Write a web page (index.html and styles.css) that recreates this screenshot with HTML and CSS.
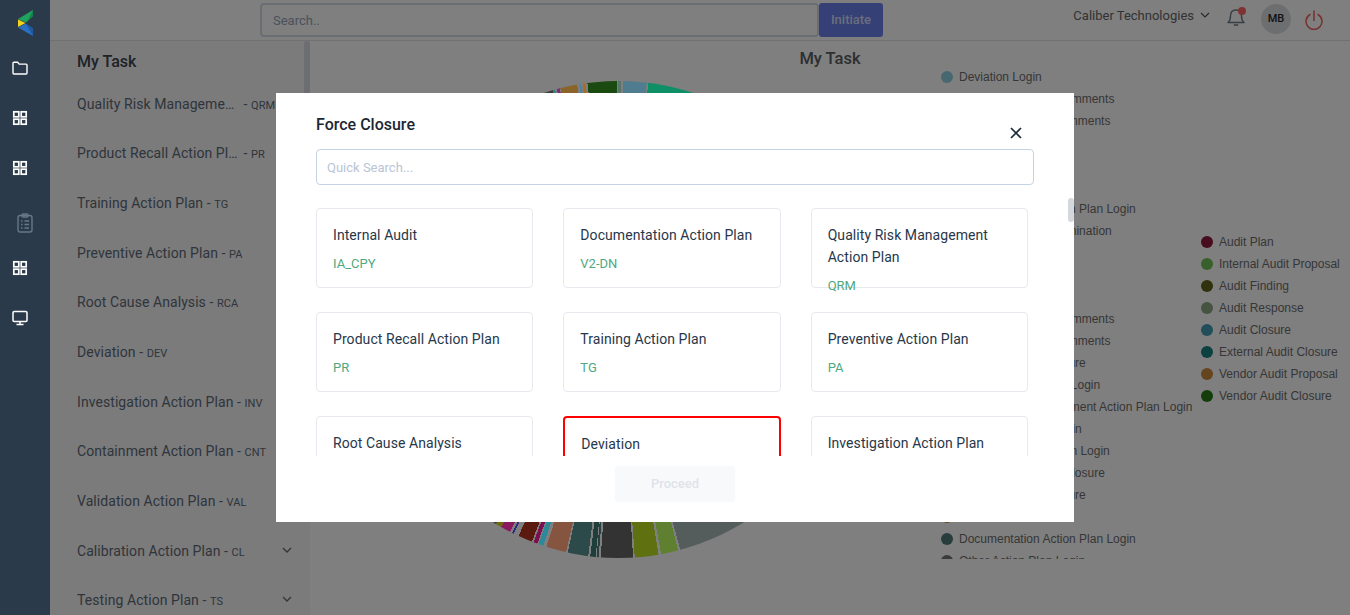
FILE: index.html
```html
<!DOCTYPE html>
<html lang="en">
<head>
<meta charset="utf-8">
<title>My Task</title>
<link rel="stylesheet" href="styles.css">
</head>
<body>
<div class="app">
  <aside class="rail">
    <div class="rail-logo">
      <svg width="16" height="27" viewBox="0 0 16 27">
        <polygon points="15,0 15,6 8,12.5 0,9" fill="#1fa35c"/>
        <polygon points="15,0 15,6 10,10.5" fill="#16804a"/>
        <polygon points="0,9.5 7.5,13 0,17" fill="#f2d21b"/>
        <polygon points="0,17.5 7.5,13.6 15,18.5 15,26" fill="#2a6fc0"/>
        <polygon points="7.5,13.6 15,18.5 15,26" fill="#1f5aa5"/>
      </svg>
    </div>
    <div class="rail-item">
      <svg width="16" height="16" viewBox="0 0 16 16"><path d="M1 3.2a1 1 0 0 1 1-1h3.6l1.6 1.9H14a1 1 0 0 1 1 1V13a1 1 0 0 1-1 1H2a1 1 0 0 1-1-1z" fill="none" stroke="#fff" stroke-width="1.4" stroke-linejoin="round"/></svg>
    </div>
    <div class="rail-item"><svg width="16" height="16" viewBox="0 0 16 16"><g fill="none" stroke="#fff" stroke-width="1.7"><rect x="1.8" y="1.8" width="5" height="5"/><rect x="9.2" y="1.8" width="5" height="5"/><rect x="1.8" y="9.2" width="5" height="5"/><rect x="9.2" y="9.2" width="5" height="5"/></g></svg></div>
    <div class="rail-item"><svg width="16" height="16" viewBox="0 0 16 16"><g fill="none" stroke="#fff" stroke-width="1.7"><rect x="1.8" y="1.8" width="5" height="5"/><rect x="9.2" y="1.8" width="5" height="5"/><rect x="1.8" y="9.2" width="5" height="5"/><rect x="9.2" y="9.2" width="5" height="5"/></g></svg></div>
    <div class="rail-item rail-clip">
      <svg width="16" height="20" viewBox="0 0 16 20"><g fill="none" stroke="#66788a" stroke-width="1.4"><rect x="1" y="2.5" width="14" height="16.5" rx="2"/><rect x="5" y="1" width="6" height="3" rx="1"/><path d="M4 8h1.5M7.5 8H12M4 11.5h1.5M7.5 11.5H12M4 15h1.5M7.5 15H12"/></g></svg>
    </div>
    <div class="rail-item"><svg width="16" height="16" viewBox="0 0 16 16"><g fill="none" stroke="#fff" stroke-width="1.7"><rect x="1.8" y="1.8" width="5" height="5"/><rect x="9.2" y="1.8" width="5" height="5"/><rect x="1.8" y="9.2" width="5" height="5"/><rect x="9.2" y="9.2" width="5" height="5"/></g></svg></div>
    <div class="rail-item"><svg width="16" height="16" viewBox="0 0 16 16"><rect x="1" y="1.5" width="14" height="10" rx="1.2" fill="none" stroke="#fff" stroke-width="1.5"/><path d="M8 12v2M4.5 14.6h7" stroke="#fff" stroke-width="1.5" fill="none"/></svg></div>
  </aside>

  <div class="shell">
    <header class="topbar">
      <div class="top-search">Search..</div>
      <div class="top-btn">Initiate</div>
      <div class="top-right">
        <span class="company">Caliber Technologies</span>
        <svg class="company-caret" width="10" height="6" viewBox="0 0 10 6"><path d="M1 1l4 4 4-4" fill="none" stroke="#555" stroke-width="1.2"/></svg>
        <span class="bell">
          <svg width="20" height="24" viewBox="0 0 20 24"><path d="M2 16.500c1.800-1.500 2.500-3 2.500-6.500 0-3.500 2-6 5.500-6s5.500 2.500 5.500 6c0 3.500.7 5 2.500 6.500zM7.800 19h4.400" fill="none" stroke="#6d7a88" stroke-width="1.4" stroke-linejoin="round"/></svg>
          <i class="bell-dot"></i>
        </span>
        <span class="avatar">MB</span>
        <svg class="power" width="18" height="20" viewBox="0 0 18 20"><path d="M5 4.500a8 8 0 1 0 8 0M9 1v9.500" fill="none" stroke="#f06060" stroke-width="1.500" stroke-linecap="round"/></svg>
      </div>
    </header>

    <div class="content">
      <nav class="tasks">
        <h2 class="tasks-title">My Task</h2>
        <div class="task"><span class="task-name">Quality Risk Management Action Plan</span> <span class="task-dash">-</span> <span class="task-code">QRM</span></div>
        <div class="task"><span class="task-name">Product Recall Action Plan</span> <span class="task-dash">-</span> <span class="task-code">PR</span></div>
        <div class="task"><span class="task-name">Training Action Plan</span> <span class="task-dash">-</span> <span class="task-code">TG</span></div>
        <div class="task"><span class="task-name">Preventive Action Plan</span> <span class="task-dash">-</span> <span class="task-code">PA</span></div>
        <div class="task"><span class="task-name">Root Cause Analysis</span> <span class="task-dash">-</span> <span class="task-code">RCA</span></div>
        <div class="task"><span class="task-name">Deviation</span> <span class="task-dash">-</span> <span class="task-code">DEV</span></div>
        <div class="task"><span class="task-name">Investigation Action Plan</span> <span class="task-dash">-</span> <span class="task-code">INV</span></div>
        <div class="task"><span class="task-name">Containment Action Plan</span> <span class="task-dash">-</span> <span class="task-code">CNT</span></div>
        <div class="task"><span class="task-name">Validation Action Plan</span> <span class="task-dash">-</span> <span class="task-code">VAL</span></div>
        <div class="task"><span class="task-name">Calibration Action Plan</span> <span class="task-dash">-</span> <span class="task-code">CL</span>
          <svg class="task-caret" width="10" height="6" viewBox="0 0 10 6"><path d="M1 1l4 4 4-4" fill="none" stroke="#5f6b78" stroke-width="1.300"/></svg></div>
        <div class="task"><span class="task-name">Testing Action Plan</span> <span class="task-dash">-</span> <span class="task-code">TS</span>
          <svg class="task-caret" width="10" height="6" viewBox="0 0 10 6"><path d="M1 1l4 4 4-4" fill="none" stroke="#5f6b78" stroke-width="1.300"/></svg></div>
        <div class="tasks-thumb"></div>
      </nav>

      <main class="chart">
        <h2 class="chart-title">My Task</h2>
        <div class="chart-row">
          <div class="pie"></div>
          <ul class="legend legend-main">
            <li><i class="dot d-dev"></i>Deviation Login</li>
            <li><i class="dot d-a"></i>Market Complaint Comments</li>
            <li><i class="dot d-b"></i>Change Request Comments</li>
            <li><i class="dot d-c"></i>Audit Login</li>
            <li><i class="dot d-d"></i>Capa Login</li>
            <li><i class="dot d-e"></i>Risk Login</li>
            <li><i class="dot d-f"></i>Documentation Action Plan Login</li>
            <li><i class="dot d-a"></i>Preliminary Lab Examination</li>
            <li><i class="dot d-c"></i>Change Login</li>
            <li><i class="dot d-d"></i>Recall Login</li>
            <li><i class="dot d-e"></i>Training Login</li>
            <li><i class="dot d-f"></i>Market Complaint Comments</li>
            <li><i class="dot d-b"></i>Change Request Comments</li>
            <li><i class="dot d-c"></i>Customer Audit Closure</li>
            <li><i class="dot d-d"></i>Effectiveness Check Login</li>
            <li><i class="dot d-e"></i>Quality Risk Management Action Plan Login</li>
            <li><i class="dot d-f"></i>Change Request Login</li>
            <li><i class="dot d-a"></i>Corrective Action Plan Login</li>
            <li><i class="dot d-b"></i>Effectiveness Audit Closure</li>
            <li><i class="dot d-c"></i>Customer Audit Closure</li>
            <li><i class="dot d-brown"></i>Recall Action</li>
            <li><i class="dot d-doc"></i>Documentation Action Plan Login</li>
            <li><i class="dot d-other"></i>Other Action Plan Login</li>
          </ul>
          <ul class="legend legend-audit">
            <li><i class="dot a-1"></i>Audit Plan</li>
            <li><i class="dot a-2"></i>Internal Audit Proposal</li>
            <li><i class="dot a-3"></i>Audit Finding</li>
            <li><i class="dot a-4"></i>Audit Response</li>
            <li><i class="dot a-5"></i>Audit Closure</li>
            <li><i class="dot a-6"></i>External Audit Closure</li>
            <li><i class="dot a-7"></i>Vendor Audit Proposal</li>
            <li><i class="dot a-8"></i>Vendor Audit Closure</li>
          </ul>
        </div>
      </main>
    </div>
  </div>
</div>

<div class="backdrop"></div>

<div class="modal-layer">
  <section class="modal">
    <h3 class="modal-title">Force Closure</h3>
    <svg class="modal-close" width="12" height="12" viewBox="0 0 12 12"><path d="M1 1l10 10M11 1L1 11" stroke="#1d2b3a" stroke-width="1.700" fill="none"/></svg>
    <div class="modal-search">Quick Search...</div>
    <div class="modal-list">
      <div class="card"><div class="card-name">Internal Audit</div><div class="card-code">IA_CPY</div></div>
      <div class="card"><div class="card-name">Documentation Action Plan</div><div class="card-code">V2-DN</div></div>
      <div class="card"><div class="card-name">Quality Risk Management Action Plan</div><div class="card-code">QRM</div></div>
      <div class="card"><div class="card-name">Product Recall Action Plan</div><div class="card-code">PR</div></div>
      <div class="card"><div class="card-name">Training Action Plan</div><div class="card-code">TG</div></div>
      <div class="card"><div class="card-name">Preventive Action Plan</div><div class="card-code">PA</div></div>
      <div class="card"><div class="card-name">Root Cause Analysis</div><div class="card-code">RCA</div></div>
      <div class="card card-selected"><div class="card-name">Deviation</div><div class="card-code">DEV</div></div>
      <div class="card"><div class="card-name">Investigation Action Plan</div><div class="card-code">INV</div></div>
    </div>
    <div class="modal-foot"><div class="proceed">Proceed</div></div>
    <div class="modal-thumb"></div>
  </section>
</div>
</body>
</html>
```
FILE: styles.css
```css
* { box-sizing: border-box; }
html, body { margin: 0; height: 100%; }
body {
  overflow: hidden;
  background: #fff;
  font-family: Roboto, "Liberation Sans", sans-serif;
}
h2, h3, ul { margin: 0; padding: 0; }
ul { list-style: none; }

.app { display: flex; height: 615px; }

/* rail stays above the backdrop */
.rail {
  position: relative;
  z-index: 6;
  flex: 0 0 50px;
  background: #2b3a4a;
}
.rail-logo { height: 43px; padding: 10px 0 0 18px; }
.rail-logo svg { display: block; }
.rail-item {
  height: 50px;
  padding-left: 12px;
  display: flex;
  align-items: center;
}
.rail-clip { padding: 10px 0 0 17px; }

.shell { flex: 1; min-width: 0; display: flex; flex-direction: column; }

.topbar {
  flex: 0 0 41px;
  display: flex;
  align-items: flex-start;
  padding: 3px 0 0 210px;
  border-bottom: 1px solid #e2e2e2;
  background: #fff;
}
.top-search {
  width: 559px;
  height: 34px;
  border: 2px solid #d4dbe4;
  border-radius: 4px;
  padding-left: 11px;
  font-size: 13px;
  line-height: 32px;
  color: #95a3b8;
}
.top-btn {
  width: 64px;
  height: 34px;
  background: #6b80ee;
  border-radius: 3px;
  color: #d5dcf8;
  font-size: 13px;
  font-weight: 500;
  line-height: 34px;
  text-align: center;
}
.top-right {
  margin-left: auto;
  display: flex;
  align-items: flex-start;
  padding-right: 27px;
}
.company { font-size: 13px; line-height: 18px; margin-top: 4px; color: #666; }
.company-caret { margin: 9px 0 0 6px; }
.bell { position: relative; display: block; margin: 3px 0 0 16px; width: 20px; height: 24px; }
.bell svg { display: block; }
.bell-dot {
  position: absolute;
  top: 1px;
  right: 0;
  width: 8px;
  height: 8px;
  border-radius: 50%;
  background: #ff6464;
}
.avatar {
  margin: 1px 0 0 15px;
  width: 30px;
  height: 30px;
  border-radius: 50%;
  background: #dadde0;
  color: #222;
  font-size: 11px;
  font-weight: 500;
  line-height: 30px;
  text-align: center;
}
.power { margin: 7px 0 0 14px; }

.content { flex: 1; min-height: 0; display: flex; }

.tasks {
  position: relative;
  flex: 0 0 260px;
  background: #f6f6f6;
  padding: 11px 0 0 27px;
  overflow: hidden;
}
.tasks-title { font-size: 16px; font-weight: 500; line-height: 20px; color: #3d4650; margin-bottom: 6.5px; }
.task {
  position: relative;
  height: 49.7px;
  font-size: 14px;
  letter-spacing: .07px;
  line-height: 50px;
  color: #5f6b78;
  white-space: nowrap;
}
.task-name {
  display: inline-block;
  max-width: 163px;
  overflow: hidden;
  text-overflow: ellipsis;
  vertical-align: top;
}
.task-code { font-size: 11px; }
.task-caret { position: absolute; right: 18px; top: 21px; }
.tasks-thumb {
  position: absolute;
  top: 0;
  right: 0;
  width: 6px;
  height: 480px;
  background: #d8dde2;
  border-radius: 3px;
}

.chart { flex: 1; min-width: 0; background: #fff; }
.chart-title {
  height: 25px;
  padding-top: 9px;
  font-size: 16.5px;
  font-weight: 500;
  line-height: 18px;
  color: #5a5f64;
  text-align: center;
}
.chart-row { display: flex; align-items: flex-start; padding-left: 70px; }
.pie {
  position: relative;
  z-index: 6;
  flex: 0 0 477px;
  height: 477px;
  margin-top: 15px;
  border-radius: 50%;
  background: conic-gradient(
    #56756c 0deg .6deg, transparent .6deg 1.1deg,
    #4f7c8e 1.1deg 6.8deg, transparent 6.8deg 7.2deg,
    #0f8f66 7.2deg 30deg, #3c3c3c 30deg 148deg, transparent 148deg 148.300deg,
    #545c5c 148.300deg 165deg, transparent 165deg 165.500deg,
    #5e8030 165.500deg 169.700deg, transparent 169.700deg 170.300deg,
    #5f7010 170.300deg 176.100deg, transparent 176.100deg 176.500deg,
    #333 176.500deg 184.300deg, transparent 184.300deg 184.800deg,
    #2a4040 184.800deg 185.300deg, transparent 185.300deg 185.500deg,
    #1f3f3a 185.500deg 186.800deg, transparent 186.800deg 187.300deg,
    #2d4a4a 187.300deg 192.300deg, transparent 192.300deg 192.700deg,
    #855540 192.700deg 197.600deg, transparent 197.600deg 198.400deg,
    #2a8a9a 198.400deg 199.600deg, transparent 199.600deg 199.900deg,
    #7a1050 199.900deg 200.900deg, transparent 200.900deg 201.300deg,
    #5a1a10 201.300deg 204.800deg, transparent 204.800deg 206.100deg,
    #2a2a80 206.100deg 206.500deg, transparent 206.500deg 207.100deg,
    #8a1a60 207.100deg 209.500deg, #6a6a10 209.500deg 211deg,
    #3c3c3c 211deg 344deg, #2a8a7a 344deg 344.600deg, transparent 344.600deg 345deg,
    #7a2a80 345deg 345.700deg, transparent 345.700deg 345.900deg,
    #8a6428 345.900deg 350deg, transparent 350deg 350.500deg,
    #4a86a0 350.500deg 351deg, transparent 351deg 351.300deg,
    #b06a20 351.300deg 352deg, transparent 352deg 352.500deg,
    #1a4a10 352.500deg 359.700deg, transparent 359.700deg 360deg
  );
}

.legend { font-family: "Liberation Sans", Arial, sans-serif; font-size: 12px; color: #6e6e6e; }
.legend li { display: flex; align-items: center; height: 22px; white-space: nowrap; }
.legend-main { margin-left: 84px; width: 260px; height: 493px; overflow: hidden; }
.legend-audit { margin: 165px 0 0 0; }
.dot { flex: none; width: 12px; height: 12px; border-radius: 50%; margin-right: 6px; }
.d-dev { background: #8fd0e0; }
.d-a { background: #9cc; }
.d-b { background: #c9a; }
.d-c { background: #ac9; }
.d-d { background: #9ac; }
.d-e { background: #ca9; }
.d-f { background: #a9c; }
.d-brown { background: #d08040; }
.d-doc { background: #4f7c78; }
.d-other { background: #777; }
.a-1 { background: #8f1a3c; }
.a-2 { background: #6fc054; }
.a-3 { background: #5e6518; }
.a-4 { background: #8aa880; }
.a-5 { background: #459bb5; }
.a-6 { background: #1a8080; }
.a-7 { background: #c98a3a; }
.a-8 { background: #2a7a18; }

/* modal */
.backdrop {
  position: fixed;
  inset: 0;
  z-index: 5;
  background: rgba(0, 0, 0, .5);
}
.modal-layer {
  position: fixed;
  inset: 0;
  z-index: 7;
  display: flex;
  align-items: center;
  justify-content: center;
}
.modal {
  position: relative;
  width: 798px;
  height: 429px;
  padding: 22px 40px 0;
  background: #fff;
}
.modal-title { font-size: 16px; font-weight: 500; line-height: 20px; color: #1c2733; }
.modal-close { position: absolute; top: 34px; right: 52px; }
.modal-search {
  height: 36px;
  margin-top: 14px;
  border: 1px solid #c6d2e6;
  border-radius: 4px;
  padding-left: 10px;
  font-size: 13px;
  line-height: 36px;
  color: #b9c4d6;
}
.modal-list {
  height: 248px;
  margin-top: 23px;
  overflow: hidden;
  display: grid;
  grid-template-columns: repeat(3, 217.33px);
  grid-auto-rows: 80px;
  gap: 24px 30px;
}
.card {
  border: 1px solid #e6e9ee;
  border-radius: 4px;
  padding: 15px 16px;
}
.card-selected { border: 2px solid #f00; padding: 15px 16px 14px; }
.card-name { font-size: 14px; letter-spacing: .07px; line-height: 22px; color: #27374a; }
.card-code { margin-top: 7px; font-size: 13px; line-height: 22px; color: #4fa87f; }
.modal-foot { margin-top: 10px; display: flex; justify-content: center; }
.proceed {
  width: 120px;
  height: 36px;
  background: #f8f9fb;
  border-radius: 3px;
  font-size: 13px;
  font-weight: 500;
  line-height: 36px;
  text-align: center;
  color: #dfe3ea;
}
.modal-thumb {
  position: absolute;
  top: 105px;
  right: 0;
  width: 6px;
  height: 24px;
  border-radius: 3px;
  background: #d4d8dd;
}
```
